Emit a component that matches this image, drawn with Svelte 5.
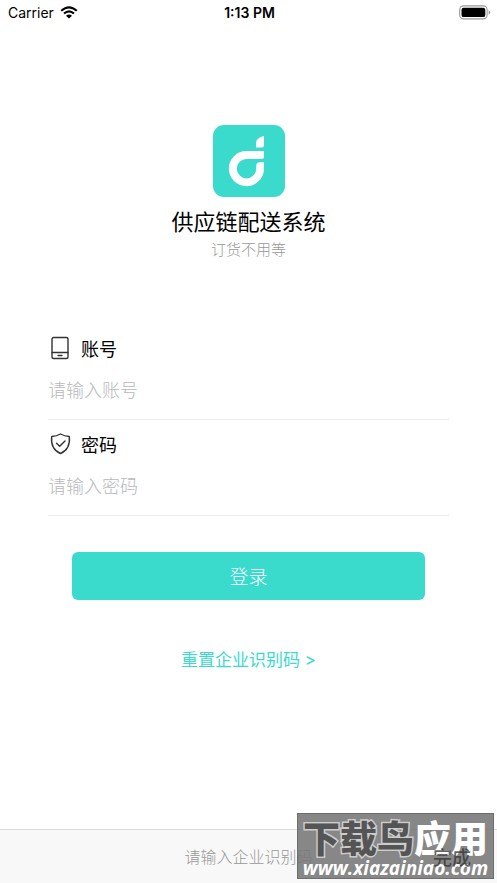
<script>
  let account = $state('');
  let password = $state('');
  let companyCode = $state('');

  function login(event) {
    event.preventDefault();
  }
</script>

<div class="page">
  <header class="status-bar">
    <div class="carrier">
      <span>Carrier</span>
      <svg width="18" height="13" viewBox="0 0 18 13" aria-hidden="true">
        <path d="M1.2 4.8Q9-2.2 16.8 4.8M4 7.6Q9 3 14 7.6" fill="none" stroke="#000" stroke-width="2.1" />
        <path d="M9 12.6L6 9.7Q9 7.2 12 9.7Z" />
      </svg>
    </div>
    <time>1:13 PM</time>
    <div class="battery">
      <svg width="32" height="15" viewBox="0 0 32 15" aria-hidden="true">
        <rect x="0.7" y="0.9" width="27.4" height="13" rx="3.8" fill="none" stroke="#999" stroke-width="1.1" />
        <rect x="2.5" y="2.7" width="23.8" height="9.4" rx="2.2" />
        <path d="M29.6 5.2Q31.2 5.8 31.2 7.4T29.6 9.6Z" fill="#999" />
      </svg>
    </div>
  </header>

  <main>
    <div class="brand">
      <svg class="logo" width="72" height="72" viewBox="0 0 72 72" aria-hidden="true">
        <rect width="72" height="72" rx="11" fill="#3adacd" />
        <path d="M51 26V31.5Q51 34 48.5 34H33.5A9.7 9.7 0 1 0 43.2 43.7V41Q43.2 37.3 47 37.3H51V43.7A17.6 17.6 0 1 1 33.4 26Z" fill="#fff" />
        <path d="M51 11V20Q51 22.5 48.5 22.5H43V18.5Q43 12.5 51 11Z" fill="#fff" />
      </svg>
      <h1>供应链配送系统</h1>
      <p>订货不用等</p>
    </div>

    <form onsubmit={login}>
      <div class="field">
        <label for="account">
          <svg width="24" height="24" viewBox="0 0 24 24" aria-hidden="true">
            <rect x="4" y="1.5" width="16" height="21" rx="1.5" />
            <path d="M4 16.5H20M10 19.5H14" />
          </svg>
          账号
        </label>
        <input id="account" type="text" placeholder="请输入账号" bind:value={account} />
      </div>
      <div class="field">
        <label for="password">
          <svg width="24" height="24" viewBox="0 0 24 24" aria-hidden="true">
            <path d="M12.5 2Q16.5 4.3 21.3 4.5Q22.7 17 12.5 21.5Q2.3 17 3.7 4.5Q8.5 4.3 12.5 2Z" />
            <path d="M8.5 11.3L11.7 14.3L17 9" />
          </svg>
          密码
        </label>
        <input id="password" type="password" placeholder="请输入密码" bind:value={password} />
      </div>
      <button class="login" type="submit">登录</button>
    </form>

    <a class="reset" href="#reset">重置企业识别码 &gt;</a>
  </main>

  <footer class="toolbar">
    <input type="text" aria-label="企业识别码" placeholder="请输入企业识别码" bind:value={companyCode} />
    <button type="button">完成</button>
  </footer>

  <div class="watermark">
    <div class="site-name"><span>下载鸟</span>应用</div>
    <div class="site-url">www.xiazainiao.com</div>
  </div>
</div>

<style>
  :global(body) {
    margin: 0;
    background: #fff;
  }

  .page {
    position: relative;
    display: flex;
    flex-direction: column;
    min-height: 100vh;
    overflow: hidden;
    color: #000;
    font-family: Inter, "Noto Sans CJK SC", sans-serif;
  }

  input,
  button {
    font-family: inherit;
  }

  .status-bar {
    display: grid;
    grid-template-columns: 1fr auto 1fr;
    align-items: center;
    height: 25px;
    padding: 0 6px 0 8px;
    font-size: 14px;
  }

  .carrier {
    display: flex;
    align-items: center;
    gap: 6px;
  }

  time {
    font-weight: 600;
  }

  .battery {
    display: flex;
    justify-content: flex-end;
  }

  main {
    flex: 1;
    display: flex;
    flex-direction: column;
    padding: 100px 48px 0;
  }

  .brand {
    display: flex;
    flex-direction: column;
    align-items: center;
  }

  h1 {
    margin: 9px 0 0;
    font-size: 22px;
    font-weight: 400;
    line-height: 32px;
  }

  p {
    margin: 0;
    color: #999;
    font-size: 15px;
    font-weight: 300;
    line-height: 24px;
  }

  form {
    display: flex;
    flex-direction: column;
    margin-top: 62px;
  }

  .field {
    display: flex;
    flex-direction: column;
    padding-bottom: 11px;
    border-bottom: 1px solid #ebebeb;
  }

  label {
    display: flex;
    align-items: center;
    gap: 9px;
    height: 48px;
    font-size: 18px;
  }

  label svg {
    fill: none;
    stroke: #333;
    stroke-width: 1.4;
    stroke-linecap: round;
    stroke-linejoin: round;
  }

  .field input {
    height: 36px;
    padding: 0;
    border: 0;
    outline: 0;
    background: none;
    font-size: 18px;
    font-weight: 300;
  }

  input::placeholder {
    color: #b8b8bd;
    opacity: 1;
  }

  .login {
    height: 48px;
    margin: 36px 24px 0;
    padding: 0 0 2px;
    border: 0;
    border-radius: 6px;
    background: #3adacd;
    color: #fff;
    font-size: 19px;
    font-weight: 300;
  }

  .reset {
    align-self: center;
    margin-top: 48px;
    color: #3adacd;
    font-size: 17px;
    line-height: 24px;
    text-decoration: none;
  }

  .toolbar {
    display: grid;
    grid-template-columns: 1fr auto 1fr;
    align-items: center;
    height: 53px;
    padding: 0 26px;
    border-top: 1px solid #dcdcdc;
    background: #f8f8f8;
  }

  .toolbar input {
    grid-column: 2;
    width: 128px;
    padding: 0;
    border: 0;
    outline: 0;
    background: none;
    font-size: 16px;
    font-weight: 300;
    text-align: center;
  }

  .toolbar input::placeholder {
    color: #999;
  }

  .toolbar button {
    z-index: 1;
    justify-self: end;
    padding: 0;
    border: 0;
    background: none;
    color: rgba(50, 50, 50, 0.75);
    font-size: 19px;
    font-weight: 500;
  }

  .watermark {
    position: absolute;
    right: 3px;
    bottom: 4px;
    box-sizing: border-box;
    width: 197px;
    height: 66px;
    border: 1px solid #6d6d6d;
    background: rgba(118, 118, 118, 0.88);
    color: #fff;
    text-align: center;
    white-space: nowrap;
  }

  .site-name {
    margin-top: 5px;
    font-size: 37px;
    font-style: oblique 8deg;
    font-weight: 900;
    line-height: 42px;
  }

  .site-name span {
    color: #555;
    paint-order: stroke fill;
    -webkit-text-stroke: 3px #ccc;
  }

  .site-url {
    font-family: "Open Sans", sans-serif;
    font-size: 19px;
    font-style: italic;
    font-weight: 700;
    line-height: 14px;
  }
</style>
